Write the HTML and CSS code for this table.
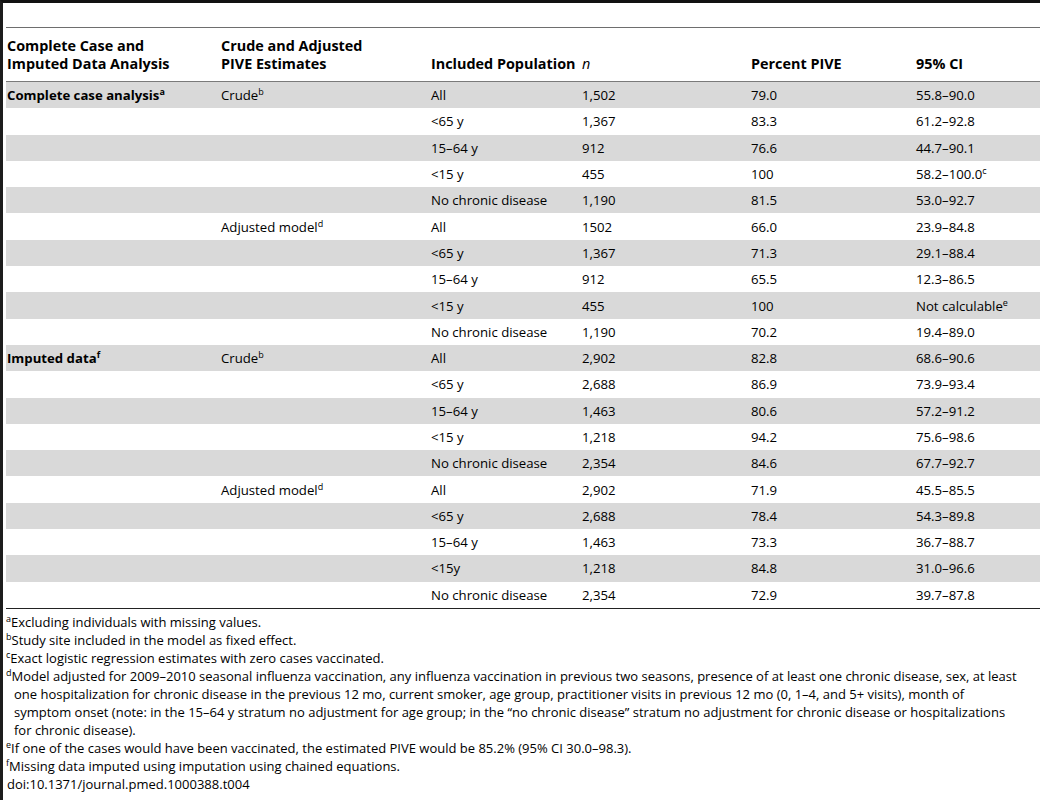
FILE: index.html
```html
<!DOCTYPE html>
<html lang="en">
<head>
<meta charset="UTF-8">
<meta name="viewport" content="width=device-width, initial-scale=1.0">
<title>Table 4 - PIVE estimates</title>
<link rel="stylesheet" href="styles.css">
</head>
<body>
<div class="page">
    <div class="caption-space"></div>

    <table class="data">
        <colgroup>
            <col class="c1">
            <col class="c2">
            <col class="c3">
            <col class="c4">
            <col class="c5">
            <col class="c6">
        </colgroup>
        <thead>
            <tr>
                <th>Complete Case and<br>Imputed Data Analysis</th>
                <th>Crude and Adjusted<br>PIVE Estimates</th>
                <th>Included Population</th>
                <th class="ital">n</th>
                <th>Percent PIVE</th>
                <th>95% CI</th>
            </tr>
        </thead>
        <tbody>
            <tr><td class="grp">Complete case analysis<sup>a</sup></td><td>Crude<sup>b</sup></td><td>All</td><td>1,502</td><td>79.0</td><td>55.8–90.0</td></tr>
            <tr><td></td><td></td><td>&lt;65 y</td><td>1,367</td><td>83.3</td><td>61.2–92.8</td></tr>
            <tr><td></td><td></td><td>15–64 y</td><td>912</td><td>76.6</td><td>44.7–90.1</td></tr>
            <tr><td></td><td></td><td>&lt;15 y</td><td>455</td><td>100</td><td>58.2–100.0<sup>c</sup></td></tr>
            <tr><td></td><td></td><td>No chronic disease</td><td>1,190</td><td>81.5</td><td>53.0–92.7</td></tr>
            <tr><td></td><td>Adjusted model<sup>d</sup></td><td>All</td><td>1502</td><td>66.0</td><td>23.9–84.8</td></tr>
            <tr><td></td><td></td><td>&lt;65 y</td><td>1,367</td><td>71.3</td><td>29.1–88.4</td></tr>
            <tr><td></td><td></td><td>15–64 y</td><td>912</td><td>65.5</td><td>12.3–86.5</td></tr>
            <tr><td></td><td></td><td>&lt;15 y</td><td>455</td><td>100</td><td>Not calculable<sup>e</sup></td></tr>
            <tr><td></td><td></td><td>No chronic disease</td><td>1,190</td><td>70.2</td><td>19.4–89.0</td></tr>
            <tr><td class="grp">Imputed data<sup>f</sup></td><td>Crude<sup>b</sup></td><td>All</td><td>2,902</td><td>82.8</td><td>68.6–90.6</td></tr>
            <tr><td></td><td></td><td>&lt;65 y</td><td>2,688</td><td>86.9</td><td>73.9–93.4</td></tr>
            <tr><td></td><td></td><td>15–64 y</td><td>1,463</td><td>80.6</td><td>57.2–91.2</td></tr>
            <tr><td></td><td></td><td>&lt;15 y</td><td>1,218</td><td>94.2</td><td>75.6–98.6</td></tr>
            <tr><td></td><td></td><td>No chronic disease</td><td>2,354</td><td>84.6</td><td>67.7–92.7</td></tr>
            <tr><td></td><td>Adjusted model<sup>d</sup></td><td>All</td><td>2,902</td><td>71.9</td><td>45.5–85.5</td></tr>
            <tr><td></td><td></td><td>&lt;65 y</td><td>2,688</td><td>78.4</td><td>54.3–89.8</td></tr>
            <tr><td></td><td></td><td>15–64 y</td><td>1,463</td><td>73.3</td><td>36.7–88.7</td></tr>
            <tr><td></td><td></td><td>&lt;15y</td><td>1,218</td><td>84.8</td><td>31.0–96.6</td></tr>
            <tr><td></td><td></td><td>No chronic disease</td><td>2,354</td><td>72.9</td><td>39.7–87.8</td></tr>
        </tbody>
    </table>

    <!-- footnotes under the table -->
    <div class="notes">
        <p><sup>a</sup>Excluding individuals with missing values.</p>
        <p><sup>b</sup>Study site included in the model as fixed effect.</p>
        <p><sup>c</sup>Exact logistic regression estimates with zero cases vaccinated.</p>
        <p><sup>d</sup>Model adjusted for 2009–2010 seasonal influenza vaccination, any influenza vaccination in previous two seasons, presence of at least one chronic disease, sex, at least<br>one hospitalization for chronic disease in the previous 12 mo, current smoker, age group, practitioner visits in previous 12 mo (0, 1–4, and 5+ visits), month of<br>symptom onset (note: in the 15–64 y stratum no adjustment for age group; in the “no chronic disease” stratum no adjustment for chronic disease or hospitalizations<br>for chronic disease).</p>
        <p><sup>e</sup>If one of the cases would have been vaccinated, the estimated PIVE would be 85.2% (95% CI 30.0–98.3).</p>
        <p><sup>f</sup>Missing data imputed using imputation using chained equations.</p>
        <p class="doi">doi:10.1371/journal.pmed.1000388.t004</p>
    </div>
</div>
</body>
</html>
```

FILE: styles.css
```css
body, html {
    margin: 0;
    background: #ffffff;
}

.page {
    width: 1037px;
    height: 797px;
    border-left: 3px solid #1c1c1c;
    border-top: 3px solid #111111;
    font-family: "Open Sans", "DejaVu Sans", sans-serif;
    color: #000000;
    overflow: hidden;
}

/* empty band where the table title was */
.caption-space {
    height: 24px;
    margin-left: 3px;
    border-bottom: 1px solid #6e6e6e;
}

.data {
    margin-left: 3px;
    width: 1034px;
    border-collapse: collapse;
    table-layout: fixed;
    font-size: 13.2px;
}

.c1 { width: 214px; }
.c2 { width: 210px; }
.c3 { width: 151px; }
.c4 { width: 169px; }
.c5 { width: 165px; }
.c6 { width: 125px; }

.data th {
    text-align: left;
    vertical-align: bottom;
    font-weight: bold;
    font-size: 14.4px;
    line-height: 18px;
    padding: 9px 0 8px 1px;
    border-bottom: 1px solid #7a7a7a;
}

.data th.ital {
    font-style: italic;
    font-weight: normal;
}

.data td {
    height: 26.3px;
    padding: 0 0 0 1px;
    vertical-align: middle;
    white-space: nowrap;
    line-height: 18px;
}

.data tbody tr:nth-child(odd) td {
    background: #d9d9d9;
}

.data tbody tr:last-child td {
    border-bottom: 1px solid #222222;
}

.data td.grp {
    font-weight: bold;
}

.data sup {
    font-size: 9px;
    line-height: 0;
    vertical-align: 5px;
}

.notes {
    padding: 4px 0 0 3px;
    font-size: 13px;
    line-height: 18px;
}

.notes p {
    margin: 0;
    padding-left: 8px;
    text-indent: -8px;
    white-space: nowrap;
}

.notes sup {
    font-size: 9px;
    line-height: 0;
    vertical-align: 5px;
}

.notes p.doi {
    padding-left: 1px;
    text-indent: 0;
}
```
